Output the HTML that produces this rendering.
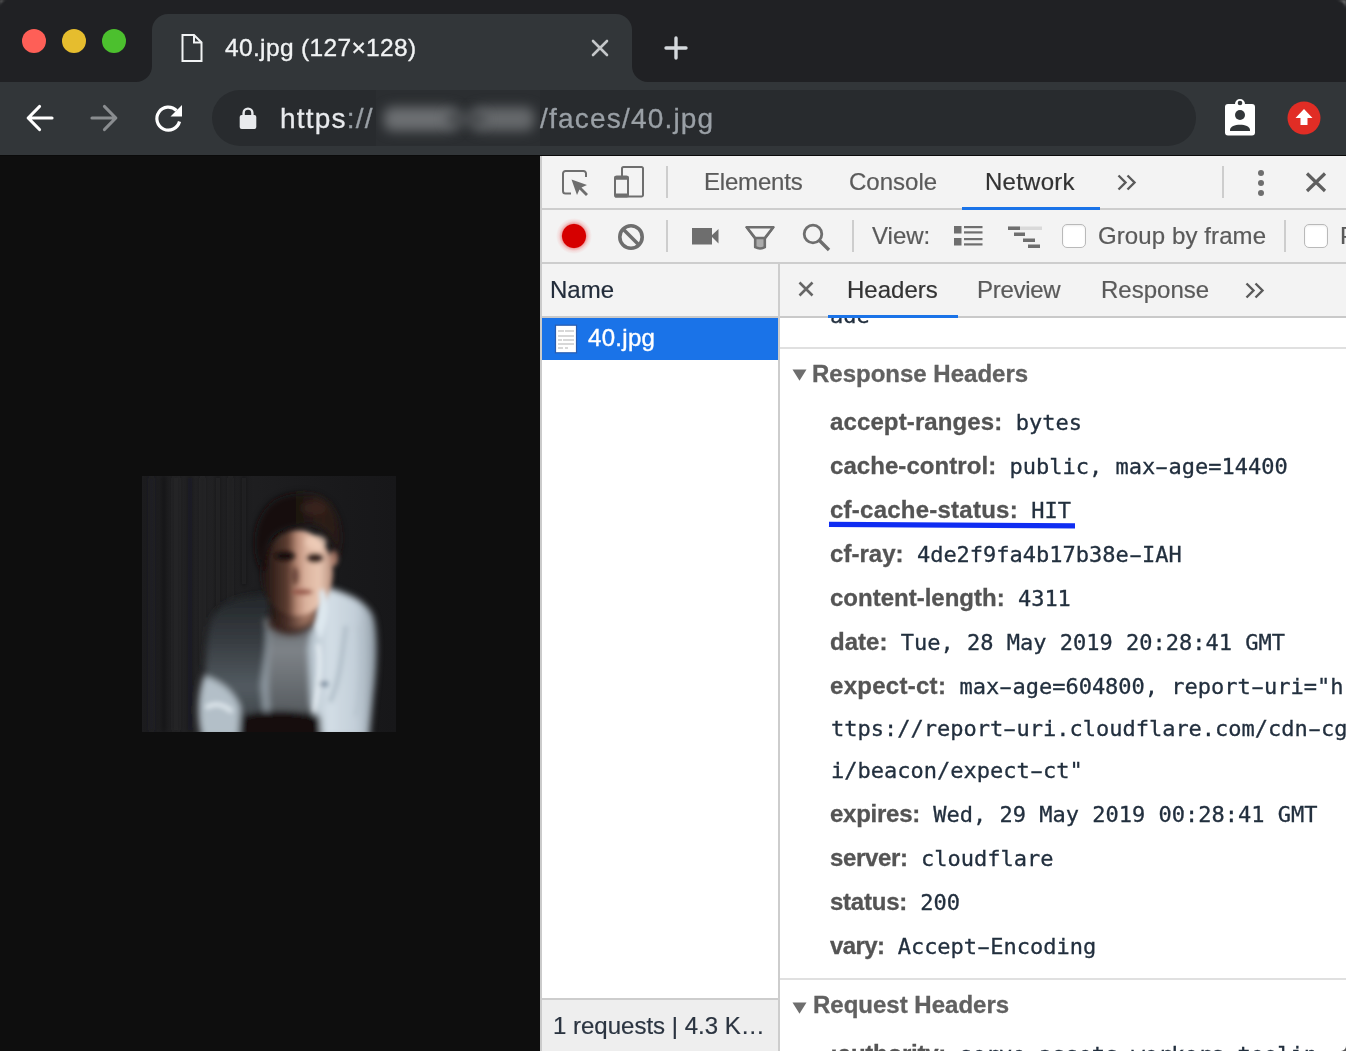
<!DOCTYPE html>
<html lang="en">
<head>
<meta charset="utf-8">
<title>40.jpg (127×128)</title>
<style>
*{box-sizing:border-box;margin:0;padding:0}
html,body{width:1346px;height:1051px;overflow:hidden;background:#0e0e0e}
body{position:relative;font-family:"Liberation Sans",sans-serif;-webkit-font-smoothing:antialiased}
.abs{position:absolute}
.t{position:absolute;white-space:nowrap;line-height:1;will-change:transform}
/* browser chrome */
#frame{left:0;top:0;width:1346px;height:82px;background:#202124}
#toolbar{left:0;top:82px;width:1346px;height:73px;background:#323639}
#tbline{left:0;top:155px;width:1346px;height:1px;background:#0a0a0a}
#tab{left:152px;top:14px;width:480px;height:68px;background:#323639;border-radius:16px 16px 0 0}
.tl{width:24px;height:24px;border-radius:50%;top:29px}
#omni{left:212px;top:90px;width:984px;height:56px;border-radius:28px;background:#282b2e}
/* page */
#page{left:0;top:156px;width:540px;height:895px;background:#0e0e0e}
/* devtools */
#dt{left:540px;top:156px;width:806px;height:895px;background:#f3f3f3;border-left:2px solid #cbcbcb;color:#333}
.hl{position:absolute;background:#cdcdcd;height:2px}
.vl{position:absolute;background:#cdcdcd;width:2px}
.ui{font-size:24px;color:#333;-webkit-text-stroke:0.2px}
.dtab{font-size:24px;color:#333;-webkit-text-stroke:0.2px}
.hn{font-weight:bold;font-size:24px;color:#545454;-webkit-text-stroke:0.3px #545454}
.hv{font-family:"DejaVu Sans Mono","Liberation Mono",monospace;font-size:22px;color:#222f3e;-webkit-text-stroke:0.3px #222f3e}
.cb{width:24px;height:24px;border-radius:5px;background:#fff;border:1.500px solid #b9b9b9;box-shadow:inset 0 1px 2px rgba(0,0,0,.08)}
.row{will-change:transform;position:absolute;white-space:pre;height:44px;line-height:44px;font-size:24px}
.row span{line-height:44px}
.sec{font-weight:bold;font-size:24px;color:#616161;-webkit-text-stroke:0.3px #616161}
.hy{display:inline-block;transform:scaleX(1.75)}
</style>
</head>
<body>
<!-- ===== Browser frame ===== -->
<div id="frame" class="abs"></div>
<div id="toolbar" class="abs"></div>
<div id="tbline" class="abs"></div>
<div id="tab" class="abs"></div>
<svg class="abs" style="left:136px;top:66px" width="16" height="16"><path d="M16 0 V16 H0 A16 16 0 0 0 16 0Z" fill="#323639"/></svg>
<svg class="abs" style="left:632px;top:66px" width="16" height="16"><path d="M0 0 V16 H16 A16 16 0 0 1 0 0Z" fill="#323639"/></svg>
<div class="abs tl" style="left:22px;background:#fe5f57"></div>
<div class="abs tl" style="left:62px;background:#e6bd2e"></div>
<div class="abs tl" style="left:102px;background:#4cc02e"></div>
<div id="omni" class="abs"></div>

<!-- tab favicon -->
<svg class="abs" style="left:180px;top:33px" width="24" height="30" viewBox="0 0 24 30"><path d="M2.5 2 H14 L21.5 9.5 V28 H2.5 Z" fill="none" stroke="#f1f3f4" stroke-width="2" stroke-linejoin="miter"/><path d="M14 2 V9.5 H21.5" fill="none" stroke="#f1f3f4" stroke-width="2"/></svg>
<div class="t" id="tabtitle" style="-webkit-text-stroke:0.35px #f1f3f4;left:224.5px;top:35.5px;font-size:24.5px;color:#f1f3f4;letter-spacing:0.35px">40.jpg (127×128)</div>
<svg class="abs" style="left:590px;top:38px" width="20" height="20" viewBox="0 0 20 20"><path d="M3 3 L17 17 M17 3 L3 17" stroke="#c4c7c9" stroke-width="2.600" stroke-linecap="round" fill="none"/></svg>
<svg class="abs" style="left:662px;top:34px" width="28" height="28" viewBox="0 0 28 28"><path d="M14 4 V24 M4 14 H24" stroke="#d5d9dd" stroke-width="3.400" stroke-linecap="round" fill="none"/></svg>
<!-- nav -->
<svg class="abs" style="left:24px;top:101.500px" width="32" height="32" viewBox="0 0 32 32"><path d="M28 16 H5 M15.500 4.500 L4.200 16 L15.500 27.500" stroke="#ffffff" stroke-width="3.200" fill="none" stroke-linejoin="round" stroke-linecap="round"/></svg>
<svg class="abs" style="left:88px;top:101.500px" width="32" height="32" viewBox="0 0 32 32"><path d="M4 16 H27 M16.500 4.500 L27.800 16 L16.500 27.500" stroke="#8a8d90" stroke-width="3.200" fill="none" stroke-linejoin="round" stroke-linecap="round"/></svg>
<svg class="abs" style="left:152px;top:101.500px" width="34" height="32" viewBox="0 0 34 32"><path d="M24.5 8.5 A11.5 11.5 0 1 0 27.5 19.5" stroke="#ffffff" stroke-width="3.2" fill="none"/><path d="M30 3 V14.5 H18.5 Z" fill="#ffffff"/></svg>
<!-- lock -->
<svg class="abs" style="left:238px;top:106px" width="20" height="24" viewBox="0 0 20 24"><rect x="1.7" y="9" width="16.6" height="14" rx="2" fill="#e8eaed"/><path d="M5.6 10 V7 A4.4 4.4 0 0 1 14.4 7 V10" stroke="#e8eaed" stroke-width="2.4" fill="none"/></svg>
<div class="t" id="url1" style="-webkit-text-stroke:0.3px;left:280px;top:104.500px;font-size:28px;color:#e8eaed;letter-spacing:1.2px">https<span style="color:#9aa0a6">://</span></div>
<div class="abs" style="left:376px;top:90px;width:164px;height:56px;background:#2b2e31;overflow:hidden">
  <div class="abs" style="left:8px;top:17px;width:74px;height:24px;background:#6c6f72;filter:blur(6px);border-radius:8px"></div>
  <div class="abs" style="left:96px;top:17px;width:62px;height:24px;background:#65686b;filter:blur(6px);border-radius:8px"></div>
  <div class="abs" style="left:70px;top:22px;width:40px;height:14px;background:#4a4d50;filter:blur(6px);border-radius:8px"></div>
</div>
<div class="t" id="url2" style="-webkit-text-stroke:0.3px;left:540px;top:104.500px;font-size:28px;color:#9aa0a6;letter-spacing:1.2px">/faces/40.jpg</div>
<!-- extension icons -->
<svg class="abs" style="left:1224px;top:97px" width="32" height="40" viewBox="0 0 32 40"><path d="M4 7 H11 A5 5 0 0 1 21 7 H28 A3 3 0 0 1 31 10 V35.500 A3 3 0 0 1 28 38.500 H4 A3 3 0 0 1 1 35.500 V10 A3 3 0 0 1 4 7Z" fill="#ffffff"/><circle cx="16" cy="6" r="2.300" fill="#323639"/><circle cx="16" cy="18" r="5" fill="#323639"/><path d="M6 33 C6 26 26 26 26 33 V34 H6Z" fill="#323639"/></svg>
<svg class="abs" style="left:1287px;top:101px" width="34" height="34" viewBox="0 0 34 34"><circle cx="17" cy="17" r="16.5" fill="#e12d25"/><path d="M17 8 L25.5 17 H20.5 V24 H13.5 V17 H8.5 Z" fill="#ffffff"/></svg>
<!--CHROME-ICONS-END-->
<!-- ===== Page ===== -->
<div id="page" class="abs"></div>

<svg class="abs" id="photo" style="left:142px;top:476px" width="254" height="256" viewBox="0 0 254 256">
<defs>
<filter id="b1" x="-20%" y="-20%" width="140%" height="140%"><feGaussianBlur stdDeviation="1.2"/></filter>
<filter id="b2" x="-20%" y="-20%" width="140%" height="140%"><feGaussianBlur stdDeviation="2"/></filter>
<filter id="b3" x="-20%" y="-20%" width="140%" height="140%"><feGaussianBlur stdDeviation="3"/></filter>
<filter id="b5" x="-30%" y="-30%" width="160%" height="160%"><feGaussianBlur stdDeviation="5"/></filter>
<filter id="b8" x="-30%" y="-30%" width="160%" height="160%"><feGaussianBlur stdDeviation="8"/></filter>
<linearGradient id="bgg" x1="0" x2="1" y1="0" y2="0"><stop offset="0" stop-color="#1c1c1e"/><stop offset="0.2" stop-color="#232325"/><stop offset="0.45" stop-color="#1e1e20"/><stop offset="0.8" stop-color="#19191b"/><stop offset="1" stop-color="#171719"/></linearGradient>
<linearGradient id="faceg" gradientUnits="userSpaceOnUse" x1="118" x2="192" y1="0" y2="0"><stop offset="0" stop-color="#1a110f"/><stop offset="0.2" stop-color="#3a2620"/><stop offset="0.38" stop-color="#5e3e32"/><stop offset="0.5" stop-color="#b88a76"/><stop offset="0.62" stop-color="#dcb39e"/><stop offset="0.8" stop-color="#e8c6b2"/><stop offset="1" stop-color="#b48a78"/></linearGradient>
<linearGradient id="neckg" gradientUnits="userSpaceOnUse" x1="126" x2="176" y1="0" y2="0"><stop offset="0" stop-color="#1e1411"/><stop offset="0.4" stop-color="#4a3028"/><stop offset="0.75" stop-color="#a67a66"/><stop offset="1" stop-color="#8a6252"/></linearGradient>
<linearGradient id="shl" gradientUnits="userSpaceOnUse" x1="0" x2="0" y1="120" y2="250"><stop offset="0" stop-color="#23272a"/><stop offset="0.35" stop-color="#383d42"/><stop offset="0.7" stop-color="#535b61"/><stop offset="1" stop-color="#3c4246"/></linearGradient>
<linearGradient id="shr" gradientUnits="userSpaceOnUse" x1="166" x2="236" y1="0" y2="0"><stop offset="0" stop-color="#b4c1cb"/><stop offset="0.3" stop-color="#d3dee6"/><stop offset="0.7" stop-color="#c2ced8"/><stop offset="1" stop-color="#8d99a3"/></linearGradient>
<linearGradient id="tsg" gradientUnits="userSpaceOnUse" x1="0" x2="0" y1="146" y2="238"><stop offset="0" stop-color="#666b70"/><stop offset="0.3" stop-color="#7e8388"/><stop offset="1" stop-color="#565b5f"/></linearGradient>
<linearGradient id="hairg" gradientUnits="userSpaceOnUse" x1="112" x2="198" y1="0" y2="0"><stop offset="0" stop-color="#121010"/><stop offset="0.45" stop-color="#17100e"/><stop offset="0.8" stop-color="#2e1e18"/><stop offset="1" stop-color="#261813"/></linearGradient>
<clipPath id="pc"><rect x="0" y="0" width="254" height="256"/></clipPath>
</defs>
<g clip-path="url(#pc)">
<rect width="254" height="256" fill="url(#bgg)"/>
<g filter="url(#b1)">
<g filter="url(#b2)" opacity=".4">
<rect x="7" y="0" width="5" height="256" fill="#2b2b2d"/><rect x="20" y="0" width="4" height="256" fill="#161618"/><rect x="31" y="0" width="6" height="256" fill="#2d2d2f"/><rect x="46" y="0" width="4" height="256" fill="#18181a"/><rect x="58" y="0" width="5" height="190" fill="#2a2a2c"/><rect x="74" y="0" width="4" height="150" fill="#1a1a1c"/><rect x="86" y="0" width="5" height="130" fill="#28282a"/><rect x="100" y="0" width="4" height="110" fill="#1b1b1d"/>
</g>
<!-- body -->
<g filter="url(#b3)">
<!-- left shirt (shadow side) -->
<path d="M130 118 C104 118 80 124 70 142 C62 166 66 190 60 214 C56 232 56 262 70 262 H130 Z" fill="url(#shl)"/>
<!-- t-shirt -->
<path d="M125 144 H169 V240 H123 Z" fill="url(#tsg)"/>
<!-- right shirt (lit) -->
<path d="M180 110 C204 116 224 124 231 140 C237 160 234 200 231 222 L227 262 H180 L169 230 L166 172 L173 134 Z" fill="url(#shr)"/>
<!-- inner lit strip of left panel -->
<path d="M123 142 C128 160 121 190 119 210 L122 238 L128 236 C124 210 129 170 127 146 Z" fill="#8f9aa2"/>
<!-- left forearm / cuff -->
<path d="M62 200 C76 204 92 214 98 232 L96 262 H60 C54 240 56 216 62 200 Z" fill="#b3bfc8"/>
<!-- bottom dark -->
<path d="M98 262 L100 240 C120 232 160 234 178 240 L180 262 Z" fill="#120e0d"/>
</g>
<g filter="url(#b2)">
<!-- shirt folds right -->
<path d="M204 150 C200 180 198 205 188 226" stroke="#aebbc5" stroke-width="5" fill="none" opacity=".8"/>
<path d="M176 168 C180 190 176 215 172 236" stroke="#f0f6fa" stroke-width="4" fill="none" opacity=".8"/>
<path d="M218 150 C222 180 220 210 214 240" stroke="#b4c1cb" stroke-width="4" fill="none" opacity=".7"/>
<ellipse cx="182" cy="208" rx="5" ry="3" fill="#6f8194" opacity=".8"/>
<!-- left cuff highlight -->
<path d="M64 232 C72 226 82 228 90 236" stroke="#e6eef3" stroke-width="5" fill="none" opacity=".8"/>
</g>
<!-- neck + face -->
<g filter="url(#b3)">
<path d="M130 118 H174 V146 C164 158 140 158 128 146 Z" fill="url(#neckg)"/>
<path d="M126 144 C140 156 160 156 172 142 L170 150 C158 162 140 162 126 150 Z" fill="#3a2822"/>
</g>
<g filter="url(#b2)">
<ellipse cx="155" cy="97" rx="36" ry="43" fill="url(#faceg)"/>
<ellipse cx="192" cy="82" rx="4" ry="8" fill="#a87c6a"/>
<ellipse cx="174" cy="66" rx="11" ry="7" fill="#efcfbb" opacity=".7"/>
</g>
<g filter="url(#b3)">
<!-- hair -->
<path d="M118 92 C109 72 111 44 128 28 C144 14 176 14 188 29 C199 42 201 62 196 82 C192 62 184 50 168 48 C150 52 138 52 130 62 C124 72 122 84 122 96 Z" fill="url(#hairg)"/>
<ellipse cx="172" cy="32" rx="12" ry="7" fill="#432a21" opacity=".6"/>
</g>
<g filter="url(#b2)">
<ellipse cx="143" cy="80" rx="10" ry="4.500" fill="#120b0a"/>
<ellipse cx="173" cy="82" rx="8" ry="4" fill="#2c1a16"/>
<ellipse cx="160" cy="116" rx="11" ry="2.200" fill="#8a4a3e"/>
<ellipse cx="153" cy="100" rx="4" ry="9" fill="#5a382c" opacity=".7"/>
</g>
<!-- collar -->
<g filter="url(#b2)">
<path d="M181 112 C189 128 187 146 178 164 L173 150 C178 136 178 124 177 116 Z" fill="#dde7ee"/>
</g>
</g>
</g>
</svg>
<!--PHOTO-END-->
<!-- ===== DevTools ===== -->
<div id="dt" class="abs"></div>

<!-- top tab bar -->
<div class="hl" style="left:542px;top:208px;width:804px"></div>
<div class="hl" style="left:542px;top:262px;width:804px"></div>
<!-- inspect icon -->
<svg class="abs" style="left:560px;top:168px" width="30" height="30" viewBox="0 0 30 30"><path d="M26 9 V5.5 A2.5 2.5 0 0 0 23.500 3 H5.500 A2.5 2.500 0 0 0 3 5.500 V23 A2.500 2.500 0 0 0 5.500 25.500 H11" fill="none" stroke="#6e6e6e" stroke-width="2"/><path d="M11.500 11.500 L27 17 L21.500 19.500 L28 26 L26 28 L19.500 21.500 L17 27 Z" fill="#6e6e6e"/></svg>
<!-- device icon -->
<svg class="abs" style="left:612px;top:164px" width="34" height="36" viewBox="0 0 34 36"><path d="M10 12 V4.500 A1.500 1.500 0 0 1 11.500 3 H29.500 A1.500 1.500 0 0 1 31 4.500 V31 A1.500 1.500 0 0 1 29.500 32.500 H16" fill="none" stroke="#6e6e6e" stroke-width="2"/><rect x="3" y="12.500" width="13" height="20" rx="1.800" fill="none" stroke="#6e6e6e" stroke-width="2"/><rect x="2.500" y="12" width="14" height="3.800" rx="1" fill="#6e6e6e"/><rect x="2.500" y="29.600" width="14" height="3.900" rx="1" fill="#6e6e6e"/></svg>
<div class="vl" style="left:666px;top:166px;height:32px"></div>
<div class="t dtab" id="t_el" style="letter-spacing:-0.2px;left:704px;top:170px;color:#5a5a5a">Elements</div>
<div class="t dtab" id="t_co" style="left:849px;top:170px;color:#5a5a5a">Console</div>
<div class="t dtab" id="t_ne" style="letter-spacing:0.25px;left:985px;top:170px;color:#333">Network</div>
<div class="abs" style="left:962px;top:207px;width:138px;height:3px;background:#1a73e8"></div>
<svg class="abs" style="left:1116px;top:173px" width="22" height="18" viewBox="0 0 22 18"><path d="M2.500 2.500 L9.500 9.500 L2.500 16.500 M11.500 2.500 L18.500 9.500 L11.500 16.500" fill="none" stroke="#5a5a5a" stroke-width="2.400"/></svg>
<div class="vl" style="left:1222px;top:166px;height:32px"></div>
<svg class="abs" style="left:1256px;top:168px" width="10" height="30" viewBox="0 0 10 30"><circle cx="5" cy="5" r="3" fill="#6e6e6e"/><circle cx="5" cy="15" r="3" fill="#6e6e6e"/><circle cx="5" cy="25" r="3" fill="#6e6e6e"/></svg>
<svg class="abs" style="left:1304px;top:170px" width="24" height="24" viewBox="0 0 24 24"><path d="M3 3.500 L21 21 M21 3.500 L3 21" fill="none" stroke="#5f5f5f" stroke-width="3.200"/></svg>
<!-- network toolbar -->
<div class="abs" style="left:556px;top:218px;width:36px;height:36px;border-radius:50%;background:radial-gradient(circle,#d60000 0,#d60000 11.500px,rgba(232,70,70,.42) 12.600px,rgba(240,110,110,.18) 15px,rgba(240,120,120,0) 18px)"></div>
<svg class="abs" style="left:616px;top:222px" width="30" height="30" viewBox="0 0 30 30"><circle cx="15" cy="15" r="11.200" fill="none" stroke="#6e6e6e" stroke-width="3.600"/><path d="M7 7 L23 23" stroke="#6e6e6e" stroke-width="3.600"/></svg>
<div class="vl" style="left:666px;top:220px;height:32px"></div>
<svg class="abs" style="left:690px;top:226px" width="30" height="20" viewBox="0 0 30 20"><rect x="2" y="2" width="20" height="16.500" fill="#6e6e6e"/><path d="M21 10 L28.500 3 V17.500 Z" fill="#6e6e6e"/></svg>
<svg class="abs" style="left:744px;top:224px" width="32" height="28" viewBox="0 0 32 28"><path d="M2.800 3.200 H29.200 L20.800 14.500 V23.200 Q16 25.800 11.200 23.200 V14.500 Z" fill="#ababab" stroke="#6e6e6e" stroke-width="2.600" stroke-linejoin="round"/><path d="M2.800 3.200 H29.200 L20.800 14 H11.200 Z" fill="#f3f3f3" stroke="#6e6e6e" stroke-width="2.600" stroke-linejoin="round"/></svg>
<svg class="abs" style="left:800px;top:222px" width="32" height="32" viewBox="0 0 32 32"><circle cx="13" cy="12" r="8.800" fill="none" stroke="#6e6e6e" stroke-width="2.800"/><path d="M19.500 18.500 L29 28" stroke="#6e6e6e" stroke-width="3.400"/></svg>
<div class="vl" style="left:852px;top:220px;height:32px"></div>
<div class="t ui" id="t_view" style="left:872px;top:224px;color:#5a5a5a">View:</div>
<svg class="abs" style="left:953px;top:225px" width="30" height="22" viewBox="0 0 30 22"><g fill="#6e6e6e"><rect x="1" y="1" width="7.500" height="7.500"/><rect x="1" y="13" width="7.500" height="7.500"/><rect x="11" y="1" width="18.500" height="2.200"/><rect x="11" y="6.300" width="18.500" height="2.200"/><rect x="11" y="13" width="18.500" height="2.200"/><rect x="11" y="18.300" width="18.500" height="2.200"/></g></svg>
<svg class="abs" style="left:1007px;top:225px" width="36" height="24" viewBox="0 0 36 24"><rect x="1" y="1.500" width="34" height="3.500" fill="#d9d9d9"/><g fill="#6e6e6e"><rect x="1" y="1.500" width="12" height="3.500"/><rect x="7" y="7.500" width="11" height="3.500"/><rect x="16" y="13.500" width="12" height="3.500"/><rect x="21" y="19.500" width="12" height="3.500"/></g></svg>
<div class="abs cb" style="left:1062px;top:224px"></div>
<div class="t ui" id="t_gbf" style="letter-spacing:0.1px;left:1098px;top:224px;color:#5a5a5a">Group by frame</div>
<div class="vl" style="left:1284px;top:220px;height:32px"></div>
<div class="abs cb" style="left:1304px;top:224px"></div>
<div class="t ui" style="left:1339.500px;top:224px;color:#5a5a5a">Preserve log</div>
<!-- left pane -->
<div class="hl" style="left:542px;top:316px;width:804px;background:#c9c9c9"></div>
<div class="vl" style="left:778px;top:264px;height:787px;background:#cdcdcd;width:2px"></div>
<div class="t ui" id="t_name" style="left:550px;top:278px;color:#222c3a">Name</div>
<div class="abs" style="left:542px;top:318px;width:236px;height:680px;background:#fff"></div>
<div class="abs" style="left:542px;top:318px;width:236px;height:42px;background:#1a73e8"></div>
<svg class="abs" style="left:553px;top:324px" width="26" height="30" viewBox="0 0 26 30"><rect x="2.500" y="1.200" width="21" height="27.600" fill="#ffffff" stroke="#2a5cae" stroke-width="1.200"/><g fill="#d8d8d8"><rect x="5" y="6" width="6" height="2"/><rect x="12" y="6" width="9" height="2"/><rect x="5" y="11" width="16" height="2"/><rect x="5" y="15" width="4" height="2"/><rect x="10" y="15" width="11" height="2"/><rect x="5" y="19" width="16" height="2"/><rect x="5" y="23" width="5" height="2"/><rect x="12" y="23" width="3" height="2"/></g></svg>
<div class="t ui" id="t_file" style="-webkit-text-stroke:0.4px #fff;letter-spacing:0.3px;left:588px;top:326px;color:#fff">40.jpg</div>
<div class="hl" style="left:542px;top:998px;width:236px;background:#cdcdcd;height:1.500px"></div>
<div class="abs" style="left:542px;top:999.500px;width:236px;height:52px;background:#eeeeee"></div>
<div class="t ui" id="t_stat" style="left:553px;top:1014px;color:#2b3440">1 requests | 4.3 K…</div>
<!-- right pane -->
<svg class="abs" style="left:797px;top:280px" width="18" height="18" viewBox="0 0 18 18"><path d="M2.500 2.500 L15.500 15.500 M15.500 2.500 L2.500 15.500" fill="none" stroke="#666" stroke-width="2.600"/></svg>
<div class="t dtab" id="t_he" style="left:847px;top:278px;color:#333">Headers</div>
<div class="t dtab" id="t_pr" style="letter-spacing:-0.3px;left:977px;top:278px;color:#5a5a5a">Preview</div>
<div class="t dtab" id="t_re" style="left:1101px;top:278px;color:#5a5a5a">Response</div>
<svg class="abs" style="left:1244px;top:281px" width="22" height="18" viewBox="0 0 22 18"><path d="M2.500 2.500 L9.500 9.500 L2.500 16.500 M11.500 2.500 L18.500 9.500 L11.500 16.500" fill="none" stroke="#5a5a5a" stroke-width="2.400"/></svg>
<div class="abs" id="content" style="left:780px;top:318px;width:566px;height:733px;background:#fff;overflow:hidden">
<div class="row" style="left:50px;top:-24.8px"><span class="hv">ade</span></div>
<div class="hl" style="left:0;top:28.5px;width:566px;background:#e0e0e0"></div>
<svg class="abs" style="left:11.5px;top:51px" width="15" height="12" viewBox="0 0 15 12"><path d="M0.500 0.500 H14.500 L7.500 11.800 Z" fill="#6e6e6e"/></svg>
<div class="row" style="left:32px;top:33.7px"><span class="sec">Response Headers</span></div>
<div class="row" style="left:50px;top:82.2px"><span class="hn" style="letter-spacing:0.12px">accept-ranges:</span><span class="hv"> bytes</span></div>
<div class="row" style="left:50px;top:126.2px"><span class="hn" style="letter-spacing:0.06px">cache-control:</span><span class="hv"> public, max<span class="hy">-</span>age=14400</span></div>
<div class="row" style="left:50px;top:170.2px"><span class="hn" style="letter-spacing:0.24px">cf-cache-status:</span><span class="hv"> HIT</span></div>
<div class="row" style="left:50px;top:214.2px"><span class="hn" style="letter-spacing:0.04px">cf-ray:</span><span class="hv"> 4de2f9fa4b17b38e<span class="hy">-</span>IAH</span></div>
<div class="row" style="left:50px;top:258.2px"><span class="hn" style="letter-spacing:0px">content-length:</span><span class="hv"> 4311</span></div>
<div class="row" style="left:50px;top:302.2px"><span class="hn" style="letter-spacing:0.04px">date:</span><span class="hv"> Tue, 28 May 2019 20:28:41 GMT</span></div>
<div class="row" style="left:50px;top:346.2px"><span class="hn" style="letter-spacing:0.28px">expect-ct:</span><span class="hv"> max<span class="hy">-</span>age=604800, report<span class="hy">-</span>uri=&quot;h</span></div>
<div class="row" style="left:51px;top:388.2px"><span class="hv">ttps://report<span class="hy">-</span>uri.cloudflare.com/cdn<span class="hy">-</span>cg</span></div>
<div class="row" style="left:51px;top:430.2px"><span class="hv">i/beacon/expect<span class="hy">-</span>ct&quot;</span></div>
<div class="row" style="left:50px;top:474.2px"><span class="hn" style="letter-spacing:-0.25px">expires:</span><span class="hv"> Wed, 29 May 2019 00:28:41 GMT</span></div>
<div class="row" style="left:50px;top:518.2px"><span class="hn" style="letter-spacing:-0.34px">server:</span><span class="hv"> cloudflare</span></div>
<div class="row" style="left:50px;top:562.2px"><span class="hn" style="letter-spacing:-0.24px">status:</span><span class="hv"> 200</span></div>
<div class="row" style="left:50px;top:606.2px"><span class="hn" style="letter-spacing:-0.6px">vary:</span><span class="hv"> Accept<span class="hy">-</span>Encoding</span></div>
<div class="hl" style="left:0;top:660px;width:566px;background:#e0e0e0"></div>
<svg class="abs" style="left:11.5px;top:683.5px" width="15" height="12" viewBox="0 0 15 12"><path d="M0.500 0.500 H14.500 L7.500 11.800 Z" fill="#6e6e6e"/></svg>
<div class="row" style="left:32.5px;top:665.0px"><span class="sec">Request Headers</span></div>
<div class="row" style="left:50px;top:714.2px"><span class="hn" style="letter-spacing:-0.23px">:authority:</span><span class="hv"> serve<span class="hy">-</span>assets.workers<span class="hy">-</span>toolin<br>g.cf</span></div>
<svg class="abs" style="left:46px;top:200px" width="254" height="14" viewBox="0 0 254 14"><path d="M3 6.300 C60 6.500 150 6.800 249 7.900" fill="none" stroke="#0f2df2" stroke-width="5.200"/></svg>
</div>
<div class="abs" style="left:828px;top:315px;width:130px;height:3px;background:#1a73e8"></div>
<!--DEVTOOLS-END-->
<!-- window corners -->
<svg class="abs" style="left:0;top:0" width="8" height="8" viewBox="0 0 8 8"><path d="M0 0 H6 A6 6 0 0 0 0 6 Z" fill="#6b6b6b" filter="url(#cb)"/><defs><filter id="cb"><feGaussianBlur stdDeviation="0.8"/></filter></defs></svg>
<svg class="abs" style="left:1336px;top:0" width="10" height="10" viewBox="0 0 10 10"><path d="M1 0 H10 V9 A9 9 0 0 0 1 0 Z" fill="#6b6b6b" filter="url(#cb2)"/><defs><filter id="cb2"><feGaussianBlur stdDeviation="0.9"/></filter></defs></svg>
<svg class="abs" style="left:1340px;top:1045px" width="6" height="6" viewBox="0 0 6 6"><path d="M6 1 V6 H1 A5 5 0 0 0 6 1 Z" fill="#555"/></svg>

</body>
</html>
